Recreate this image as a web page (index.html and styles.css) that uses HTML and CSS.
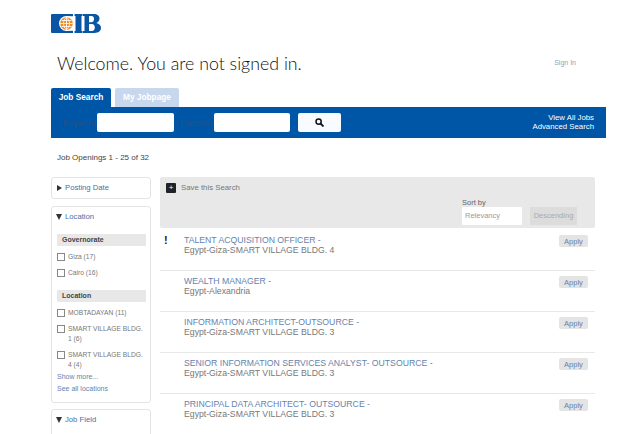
FILE: index.html
```html
<!DOCTYPE html>
<html lang="en">
<head>
    <meta charset="UTF-8">
    <title>Job Search</title>
    <link rel="stylesheet" href="styles.css">
</head>
<body>
    <div class="page">
        <div class="logo">
            <svg width="50" height="22" viewBox="0 0 50 22">
                <path fill="#0a56a5" d="M1 1h21v19h-21a1 1 0 0 1-1-1v-17a1 1 0 0 1 1-1z"/>
                <circle cx="15.500" cy="10.500" r="7.500" fill="#fff"/>
                <rect x="15.500" y="3.200" width="6.500" height="14.600" fill="#fff"/>
                <circle cx="15.500" cy="10.500" r="6.300" fill="#f08a24"/>
                <path fill="none" stroke="#fff" stroke-width=".8" d="M15.500 4.200v12.600M9.200 10.500h12.600M10.500 7.500h10M10.500 13.500h10M15.500 4.200c-4 3.500-4 9 0 12.600M15.500 4.200c4 3.500 4 9 0 12.600"/>
                <path fill="#0a56a5" d="M23.500 1h8v2h-1v15h1v2h-8v-2h1v-15h-1zM32 1h10.500c4 0 6 1.800 6 4.600 0 2.200-1.200 3.700-3.200 4.400 2.800.6 4.700 2.300 4.700 4.800 0 3.300-2.400 5.200-6.500 5.200h-11.500v-2h1.500v-15h-1.500zM38 3v6.300h2.500c1.600 0 2.500-1.200 2.500-3.200s-.9-3.100-2.500-3.100zM38 11v7h3c1.700 0 2.800-1.300 2.800-3.500s-1.100-3.500-2.800-3.500z"/>
            </svg>
        </div>

        <div class="header">
            <h1>Welcome. You are not signed in.</h1>
            <a class="sign-in" href="#">Sign In</a>
        </div>

        <div class="tabs">
            <div class="tab tab-active">Job Search</div>
            <div class="tab tab-other">My Jobpage</div>
        </div>
        <div class="search-bar">
            <label class="search-label">Keyword</label>
            <input class="search-input" type="text">
            <label class="search-label search-label-loc">Location</label>
            <input class="search-input search-input-loc" type="text">
            <button class="search-btn">
                <svg width="9" height="9" viewBox="0 0 9 9">
                    <circle cx="3.600" cy="3.600" r="2.600" fill="none" stroke="#111" stroke-width="1.500"/>
                    <path d="M5.500 5.500l3 3" stroke="#111" stroke-width="1.800"/>
                </svg>
            </button>
            <div class="search-links">
                <a href="#">View All Jobs</a>
                <a href="#">Advanced Search</a>
            </div>
        </div>

        <div class="count">Job Openings 1 - 25 of 32</div>

        <div class="content">
            <div class="sidebar">
                <div class="card card-closed">
                    <div class="card-title"><span class="arrow-right"></span>Posting Date</div>
                </div>
                <div class="card">
                    <div class="card-title"><span class="arrow-down"></span>Location</div>
                    <div class="group">Governorate</div>
                    <div class="check"><span class="box"></span><span>Giza (17)</span></div>
                    <div class="check"><span class="box"></span><span>Cairo (16)</span></div>
                    <div class="group group-second">Location</div>
                    <div class="check"><span class="box"></span><span>MOBTADAYAN (11)</span></div>
                    <div class="check"><span class="box"></span><span>SMART VILLAGE BLDG. 1 (6)</span></div>
                    <div class="check"><span class="box"></span><span>SMART VILLAGE BLDG. 4 (4)</span></div>
                    <a class="more" href="#">Show more...</a>
                    <a class="more" href="#">See all locations</a>
                </div>
                <div class="card card-last">
                    <div class="card-title"><span class="arrow-down"></span>Job Field</div>
                </div>
            </div>

            <div class="main">
                <div class="toolbar">
                    <div class="save"><span class="save-icon">+</span>Save this Search</div>
                    <div class="sort">
                        <div class="sort-label">Sort by</div>
                        <div class="sort-row">
                            <div class="sort-select">Relevancy</div>
                            <div class="sort-order">Descending</div>
                        </div>
                    </div>
                </div>

                <div class="job job-first">
                    <div class="job-flag">!</div>
                    <div class="job-text">
                        <a href="#">TALENT ACQUISITION OFFICER -</a>
                        <div>Egypt-Giza-SMART VILLAGE BLDG. 4</div>
                    </div>
                    <button class="apply">Apply</button>
                </div>
                <div class="job">
                    <div class="job-flag"></div>
                    <div class="job-text">
                        <a href="#">WEALTH MANAGER -</a>
                        <div>Egypt-Alexandria</div>
                    </div>
                    <button class="apply">Apply</button>
                </div>
                <div class="job">
                    <div class="job-flag"></div>
                    <div class="job-text">
                        <a href="#">INFORMATION ARCHITECT-OUTSOURCE -</a>
                        <div>Egypt-Giza-SMART VILLAGE BLDG. 3</div>
                    </div>
                    <button class="apply">Apply</button>
                </div>
                <div class="job">
                    <div class="job-flag"></div>
                    <div class="job-text">
                        <a href="#">SENIOR INFORMATION SERVICES ANALYST- OUTSOURCE -</a>
                        <div>Egypt-Giza-SMART VILLAGE BLDG. 3</div>
                    </div>
                    <button class="apply">Apply</button>
                </div>
                <div class="job">
                    <div class="job-flag"></div>
                    <div class="job-text">
                        <a href="#">PRINCIPAL DATA ARCHITECT- OUTSOURCE -</a>
                        <div>Egypt-Giza-SMART VILLAGE BLDG. 3</div>
                    </div>
                    <button class="apply">Apply</button>
                </div>
            </div>
        </div>
    </div>
</body>
</html>
```

FILE: styles.css
```css
* {
    margin: 0;
    padding: 0;
    box-sizing: border-box;
}

html, body {
    height: 434px;
    overflow: hidden;
    background: #fff;
}

body {
    font-family: "Liberation Sans", Arial, sans-serif;
    font-size: 9px;
    color: #555;
}

a {
    color: #6682ad;
    text-decoration: none;
}

.page {
    width: 555px;
    margin-left: 51px;
    padding-top: 13px;
}

.logo {
    height: 22px;
}

.header {
    display: flex;
    justify-content: space-between;
    align-items: center;
    height: 53px;
    padding-left: 6px;
    padding-right: 30px;
}

h1 {
    margin-top: 3px;
    font-family: Lato, sans-serif;
    font-weight: 300;
    font-size: 17.800px;
    color: #111;
}

.sign-in {
    margin-top: 1px;
    font-size: 7px;
    color: #8f9fbb;
}

.tabs {
    display: flex;
    gap: 4px;
    height: 19px;
}

.tab {
    width: 60px;
    font-size: 8.300px;
    font-weight: bold;
    text-align: center;
    line-height: 19px;
    border-radius: 2px 2px 0 0;
    color: #fff;
}

.tab-active {
    background: #0056a6;
}

.tab-other {
    width: 64px;
    background: #c7d8ee;
}

.search-bar {
    display: flex;
    align-items: center;
    height: 31px;
    background: #0056a6;
    padding-left: 12px;
    padding-right: 12px;
}

.search-label {
    width: 34px;
    font-size: 8.500px;
    color: #2f4f7c;
}

.search-label-loc {
    margin-left: 6px;
}

.search-input {
    width: 77px;
    height: 19px;
    border: none;
    border-radius: 2px;
    background: #fff;
}

.search-input-loc {
    width: 76px;
}

.search-btn {
    width: 43px;
    height: 19px;
    margin-left: 8px;
    border: none;
    border-radius: 2px;
    background: #f8fbff;
    display: flex;
    align-items: center;
    justify-content: center;
}

.search-links {
    margin-left: auto;
    margin-top: -2px;
    text-align: right;
    font-size: 7.800px;
    line-height: 9px;
}

.search-links a {
    display: block;
    color: #fff;
}

.count {
    margin-top: 15px;
    padding-left: 6px;
    font-size: 8px;
    line-height: 10px;
    color: #444;
}

.content {
    display: flex;
    gap: 9px;
    margin-top: 14px;
}

.sidebar {
    width: 100px;
    flex-shrink: 0;
}

.card {
    border: 1px solid #e4e4e4;
    border-radius: 3px;
    padding: 0 3px 0 5px;
    margin-bottom: 6px;
    height: 197px;
}

.card-closed {
    height: 22px;
    margin-bottom: 7px;
}

.card-last {
    height: 60px;
}

.card-title {
    display: flex;
    align-items: center;
    height: 19px;
    color: #3f72ab;
    font-size: 7.700px;
}

.arrow-right {
    width: 0;
    height: 0;
    margin-right: 3px;
    border-left: 5px solid #333;
    border-top: 3px solid transparent;
    border-bottom: 3px solid transparent;
}

.arrow-down {
    width: 0;
    height: 0;
    margin-right: 3px;
    margin-left: -1px;
    border-top: 6px solid #333;
    border-left: 3px solid transparent;
    border-right: 3px solid transparent;
}

.group {
    height: 12px;
    margin-top: 8px;
    margin-right: 1px;
    padding-left: 5px;
    border-radius: 1px;
    background: #e8e8e8;
    font-size: 7px;
    font-weight: bold;
    line-height: 12px;
    color: #444;
}

.group-second {
    margin-top: 12px;
}

.check {
    display: flex;
    gap: 3px;
    margin-top: 6px;
    font-size: 6.700px;
    line-height: 10px;
    min-height: 10px;
    color: #777;
}

.box {
    flex-shrink: 0;
    width: 8px;
    height: 8px;
    margin-top: 1px;
    border: 1px solid #888;
    background: #fff;
}

.more {
    display: block;
    margin-top: 2px;
    font-size: 7px;
    line-height: 10px;
}

.main {
    width: 435px;
}

.toolbar {
    display: flex;
    justify-content: space-between;
    height: 51px;
    background: #e8e8e8;
    border-radius: 2px;
    padding: 6px 18px 0 6px;
}

.save {
    display: flex;
    align-items: flex-start;
    gap: 5px;
    font-size: 7.800px;
    line-height: 10px;
    color: #777;
}

.save-icon {
    width: 10px;
    height: 10px;
    background: #222;
    border-radius: 1px;
    color: #fff;
    font-size: 8px;
    line-height: 10px;
    text-align: center;
}

.sort {
    margin-top: 15px;
    font-size: 7.500px;
    color: #666;
}

.sort-label {
    line-height: 9px;
}

.sort-row {
    display: flex;
    gap: 8px;
}

.sort-select {
    width: 60px;
    height: 18px;
    padding-left: 3px;
    background: #fff;
    border-radius: 1px;
    line-height: 18px;
    color: #999;
}

.sort-order {
    width: 47px;
    height: 18px;
    background: #dcdcdc;
    line-height: 18px;
    text-align: center;
    color: #aaa;
}

.job {
    display: flex;
    height: 41px;
    border-bottom: 1px solid #e8e8e8;
    padding-top: 5px;
}

.job-first {
    height: 43px;
    padding-top: 7px;
}

.job-flag {
    width: 24px;
    padding-left: 4px;
    font-size: 11px;
    line-height: 10px;
    font-weight: bold;
    color: #222;
}

.job-text {
    flex: 1;
    font-size: 8.700px;
    line-height: 10px;
    color: #777;
}

.job-text a {
    display: block;
}

.apply {
    width: 29px;
    height: 12px;
    margin-right: 7px;
    border: none;
    border-radius: 2px;
    background: #e4e4e4;
    font-family: "Liberation Sans", Arial, sans-serif;
    font-size: 7.500px;
    color: #6682ad;
}
```
